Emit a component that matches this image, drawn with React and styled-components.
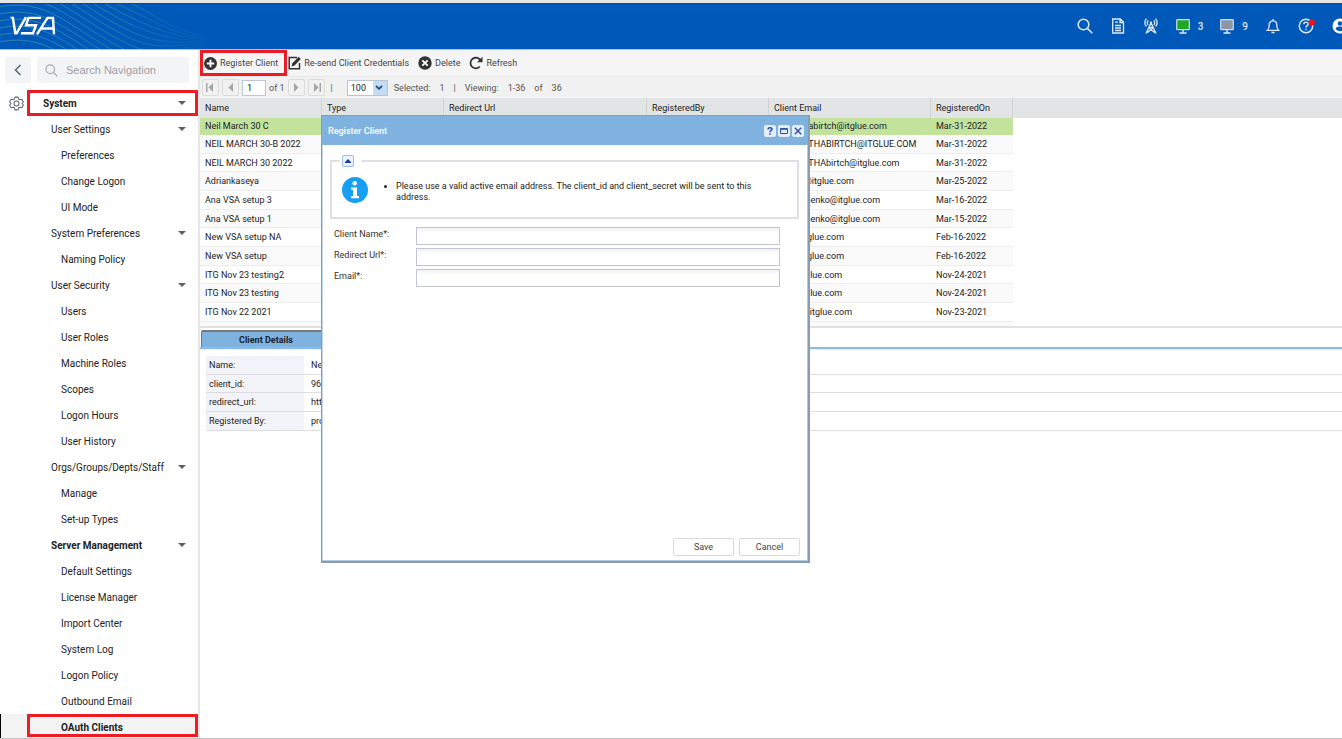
import { useState } from 'react';
import styled, { createGlobalStyle } from 'styled-components';

const GlobalStyle = createGlobalStyle`
    * {
        box-sizing: border-box;
    }
    body {
        margin: 0;
        background: white;
        color: #222;
        font-family: Roboto, "Liberation Sans", sans-serif;
        font-size: 9px;
    }
    button, input, select {
        font: inherit;
        color: inherit;
    }
    button {
        cursor: pointer;
    }
`;

const Page = styled.div`
    display: flex;
    flex-direction: column;
    height: 100vh;
    overflow: hidden;
    border-bottom: 1px solid #c4c4c4;
`;
const TopBar = styled.header`
    position: relative;
    flex: none;
    display: flex;
    align-items: center;
    justify-content: space-between;
    height: 50px;
    padding: 0 0 0 9px;
    background: #0059b9;
    border-top: 3px solid #e6e6e6;
    border-bottom: 1px solid #a9c3e2;
    box-shadow: inset 0 1px 0 #35404c;
    overflow: hidden;
`;
const Waves = styled.svg`
    position: absolute;
    left: 0;
    top: 1px;
`;
const Logo = styled.svg`
    position: relative;
`;
const TopIcons = styled.div`
    display: flex;
    align-items: center;
    gap: 17px;
    margin-right: -6px;
    color: #dfeaf7;
`;
const TopButton = styled.button`
    display: flex;
    align-items: center;
    gap: 6px;
    padding: 0;
    border: 0;
    background: none;
    font-size: 10px;
    font-weight: 500;
`;
const Body = styled.div`
    flex: 1;
    display: flex;
    min-height: 0;
`;

const Sidebar = styled.nav`
    flex: none;
    display: flex;
    flex-direction: column;
    width: 200px;
    padding-top: 7px;
    border-right: 2px solid #e6e6e6;
    overflow: hidden;
`;
const SearchRow = styled.div`
    flex: none;
    display: flex;
    gap: 6px;
    height: 26px;
    margin: 0 9px 7px 5px;
`;
const BackButton = styled.button`
    flex: none;
    display: flex;
    align-items: center;
    justify-content: center;
    width: 26px;
    padding: 0;
    border: 0;
    border-radius: 3px;
    background: #f3f4f6;
    color: #5b6670;
`;
const SearchBox = styled.label`
    flex: 1;
    min-width: 0;
    display: flex;
    align-items: center;
    gap: 8px;
    padding-left: 8px;
    border-radius: 3px;
    background: #f3f4f6;
    color: #a6abb0;
`;
const SearchInput = styled.input`
    flex: 1;
    min-width: 0;
    padding: 0;
    border: 0;
    outline: 0;
    background: none;
    font-family: "Liberation Sans", Arial, sans-serif;
    font-size: 11px;
    &::placeholder {
        color: #9b9fa4;
    }
`;
const NavRow = styled.div`
    flex: none;
    display: flex;
    align-items: center;
    height: 26px;
    background: ${({ $active }) => ($active ? '#f3f3f3' : 'none')};
    border-left: 1px solid ${({ $active }) => ($active ? '#000' : 'transparent')};
    color: #5b6670;
`;
const GearSlot = styled.span`
    display: flex;
    justify-content: flex-end;
    width: 26px;
    padding-right: 3px;
`;
const NavButton = styled.button`
    flex: 1;
    align-self: flex-start;
    display: flex;
    align-items: center;
    justify-content: space-between;
    height: ${({ $leaf }) => ($leaf ? '23px' : '26px')};
    padding: ${({ $leaf }) => ($leaf ? '3px' : '0')} 9px 0 ${({ $level }) => [13, 21, 31][$level]}px;
    border: 3px solid ${({ $marked }) => ($marked ? '#ed1c24' : 'transparent')};
    background: none;
    color: #222;
    font-size: 10px;
    font-weight: ${({ $bold }) => ($bold ? 700 : 400)};
    text-align: left;
`;

const Main = styled.main`
    position: relative;
    flex: 1;
    min-width: 0;
    display: flex;
    flex-direction: column;
`;
const Toolbar = styled.div`
    display: flex;
    align-items: center;
    height: 26px;
    background: #f5f5f5;
`;
const ToolButton = styled.button`
    display: flex;
    align-items: center;
    gap: 3px;
    height: 26px;
    padding: 0 ${({ $marked }) => ($marked ? '6px 0 1px' : '9px 0 0')};
    border: 3px solid ${({ $marked }) => ($marked ? '#ed1c24' : 'transparent')};
    border-width: ${({ $marked }) => ($marked ? '3px' : '0')};
    margin-right: ${({ $marked }) => ($marked ? '1px' : '0')};
    background: none;
    color: #444;
    white-space: nowrap;
`;
const Pager = styled.div`
    display: flex;
    align-items: center;
    gap: 3px;
    height: 22px;
    padding-left: 2px;
    background: #f1f1f1;
    border-top: 1px solid #e8e8e8;
    color: #555;
    white-space: pre;
`;
const PagerButton = styled.button`
    display: flex;
    align-items: center;
    justify-content: center;
    width: 17px;
    height: 17px;
    padding: 0;
    border: 1px solid #dcdcdc;
    border-radius: 2px;
    background: #f1f1f1;
    color: #a5a5a5;
`;
const PageInput = styled.input`
    width: 24px;
    height: 16px;
    padding: 0 4px;
    border: 1px solid #bcc6d4;
    background: white;
    color: #222;
`;
const SizePicker = styled.label`
    display: flex;
    align-items: center;
    width: 41px;
    height: 16px;
    margin-left: 8px;
    border: 1px solid #b6c4d6;
    background: linear-gradient(to right, white 25px, #c5dcf3 25px);
`;
const SizeSelect = styled.select`
    width: 27px;
    height: 14px;
    padding: 0 0 0 3px;
    border: 0;
    outline: 0;
    appearance: none;
    background: none;
    color: #222;
`;
const PagerText = styled.span`
    margin: 0 3px;
`;

const GridBox = styled.div`
    flex: none;
    height: 230px;
    overflow: hidden;
    border-bottom: 2px solid #e2e2e2;
    background: linear-gradient(#e2e4e6 20px, white 20px);
`;
const Grid = styled.table`
    table-layout: fixed;
    width: 813px;
    border-collapse: separate;
    border-spacing: 0;
`;
const HeadCell = styled.th`
    width: ${({ $width }) => $width}px;
    height: 20px;
    padding: 0 5px;
    border-right: 1px solid #cfd1d4;
    background: #e2e4e6;
    font-weight: 400;
    text-align: left;
`;
const GridRow = styled.tr`
    height: 19px;
    background: ${({ $selected }) => ($selected ? '#c3e29c' : 'white')};
    &:nth-child(even) {
        background: #fafafa;
    }
    &:nth-child(3n) {
        height: 18px;
    }
    &:first-child {
        height: 17px;
    }
`;
const Cell = styled.td`
    padding: 0 5px;
    border-bottom: 1px solid ${({ $selected }) => ($selected ? '#c3e29c' : '#ededed')};
    overflow: hidden;
    white-space: nowrap;
`;

const TabStrip = styled.div`
    flex: none;
    display: flex;
    height: 21px;
    padding: 2px 0 0 1px;
    border-bottom: 2px solid #8bbce6;
`;
const Tab = styled.button`
    width: 130px;
    padding: 0;
    border: 1px solid #777;
    border-width: 2px 1px 0;
    border-radius: 2px 2px 0 0;
    background: #80b2df;
    color: #16222e;
    font-weight: 700;
`;
const DetailsPanel = styled.div`
    padding: 6px 0 0 6px;
    border-top: 1px solid #ececec;
`;
const Details = styled.table`
    width: 100%;
    border-collapse: separate;
    border-spacing: 0;
`;
const DetailRow = styled.tr`
    height: 19px;
    &:nth-child(2) {
        height: 18px;
    }
`;
const DetailLabel = styled.th`
    width: 98px;
    padding: 0 3px;
    border-bottom: 1px solid #dcdcde;
    background: #f2f3f8;
    font-weight: 400;
    text-align: left;
`;
const DetailValue = styled.td`
    padding: 0 7px;
    border-bottom: 1px solid #dfdfdf;
`;

const Dialog = styled.section`
    position: absolute;
    left: 121px;
    top: 65px;
    display: flex;
    flex-direction: column;
    width: 489px;
    height: 448px;
    border: 1px solid #8a9cb0;
    border-width: 1px 2px 2px 1px;
    background: white;
    box-shadow: inset 1px 0 0 #c3d6e8, inset -1px -1px 0 #b5cadd;
`;
const DialogHeader = styled.header`
    display: flex;
    align-items: center;
    gap: 2px;
    height: 29px;
    padding: 0 4px 0 6px;
    background: #80b2df;
    color: white;
`;
const DialogTitle = styled.h2`
    flex: 1;
    margin: 0;
    font-size: 9px;
    font-weight: 500;
`;
const HeaderButton = styled.button`
    display: flex;
    align-items: center;
    justify-content: center;
    width: 12px;
    height: 12px;
    padding: 0;
    border: 1px solid #e4eefb;
    border-radius: 2px;
    background: #e4eefb;
    color: #2b4fb0;
`;
const Notice = styled.fieldset`
    height: 64px;
    margin: 10px 9px 8px 8px;
    padding: 0 0 0 8px;
    border: 2px solid #dfdfe6;
`;
const Legend = styled.legend`
    padding: 0 7px 0 2px;
`;
const NoticeBody = styled.div`
    display: flex;
    align-items: center;
    padding: 10px 0 0 2px;
`;
const CollapseButton = styled.button`
    display: flex;
    align-items: center;
    justify-content: center;
    width: 12px;
    height: 12px;
    padding: 0;
    border: 1px solid #9dbbe8;
    border-radius: 2px;
    background: #eaf2fd;
    color: #1f3fa8;
`;
const NoticeList = styled.ul`
    flex: 1;
    margin: 0;
    padding: 4px 44px 0 28px;
    line-height: 11px;
`;
const Form = styled.form`
    flex: 1;
    display: flex;
    flex-direction: column;
    gap: 3px;
    padding: 0 8px 5px 12px;
`;
const Field = styled.label`
    display: flex;
    color: #333;
`;
const FieldName = styled.span`
    width: 82px;
    padding-top: 2px;
`;
const FieldInput = styled.input`
    flex: 1;
    height: 18px;
    margin-right: 20px;
    padding: 0 4px;
    border: 1px solid #c3c5d4;
    background: linear-gradient(#f1f1f3, white 5px);
    outline: 0;
`;
const Actions = styled.div`
    display: flex;
    justify-content: flex-end;
    gap: 5px;
    margin-top: auto;
`;
const ActionButton = styled.button`
    width: 61px;
    height: 18px;
    padding: 0;
    border: 1px solid #d9d9d9;
    border-radius: 2px;
    background: white;
    color: #444;
`;

const navigation = [
    { name: 'System', level: 0, bold: true, marked: true },
    { name: 'User Settings', level: 1 },
    { name: 'Preferences', level: 2 },
    { name: 'Change Logon', level: 2 },
    { name: 'UI Mode', level: 2 },
    { name: 'System Preferences', level: 1 },
    { name: 'Naming Policy', level: 2 },
    { name: 'User Security', level: 1 },
    { name: 'Users', level: 2 },
    { name: 'User Roles', level: 2 },
    { name: 'Machine Roles', level: 2 },
    { name: 'Scopes', level: 2 },
    { name: 'Logon Hours', level: 2 },
    { name: 'User History', level: 2 },
    { name: 'Orgs/Groups/Depts/Staff', level: 1 },
    { name: 'Manage', level: 2 },
    { name: 'Set-up Types', level: 2 },
    { name: 'Server Management', level: 1, bold: true },
    { name: 'Default Settings', level: 2 },
    { name: 'License Manager', level: 2 },
    { name: 'Import Center', level: 2 },
    { name: 'System Log', level: 2 },
    { name: 'Logon Policy', level: 2 },
    { name: 'Outbound Email', level: 2 },
    { name: 'OAuth Clients', level: 2, bold: true, marked: true, active: true },
];

const columns = [
    { name: 'Name', width: 122 },
    { name: 'Type', width: 122 },
    { name: 'Redirect Url', width: 203 },
    { name: 'RegisteredBy', width: 122 },
    { name: 'Client Email', width: 162 },
    { name: 'RegisteredOn', width: 82 },
];

const clients = [
    { name: 'Neil March 30 C', email: 'neil.mithabirtch@itglue.com', date: 'Mar-31-2022' },
    { name: 'NEIL MARCH 30-B 2022', email: 'NEIL.MRTHABIRTCH@ITGLUE.COM', date: 'Mar-31-2022' },
    { name: 'NEIL MARCH 30 2022', email: 'NEIL.MRTHAbirtch@itglue.com', date: 'Mar-31-2022' },
    { name: 'Adriankaseya', email: 'adriank@itglue.com', date: 'Mar-25-2022' },
    { name: 'Ana VSA setup 3', email: 'ana.shchenko@itglue.com', date: 'Mar-16-2022' },
    { name: 'Ana VSA setup 1', email: 'ana.shchenko@itglue.com', date: 'Mar-15-2022' },
    { name: 'New VSA setup NA', email: 'anna@itglue.com', date: 'Feb-16-2022' },
    { name: 'New VSA setup', email: 'anna@itglue.com', date: 'Feb-16-2022' },
    { name: 'ITG Nov 23 testing2', email: 'qam@itglue.com', date: 'Nov-24-2021' },
    { name: 'ITG Nov 23 testing', email: 'qam@itglue.com', date: 'Nov-24-2021' },
    { name: 'ITG Nov 22 2021', email: 'testers@itglue.com', date: 'Nov-23-2021' },
    { name: '', email: '', date: '' },
];

const details = [
    ['Name:', 'Neil March 30 C'],
    ['client_id:', '962840175'],
    ['redirect_url:', 'https://itglue.com'],
    ['Registered By:', 'provider'],
];

const waveOffsets = [-55, -48, -41, -34, -27, -20, -13, -6, 1, 8, 15, 22, 29, 36];

const HeaderWaves = () => (
    <Waves width="230" height="46" viewBox="0 0 230 46" fill="none" aria-hidden="true">
        <defs>
            <linearGradient id="fade" x1="0" x2="230" y1="0" y2="0" gradientUnits="userSpaceOnUse">
                <stop offset="0" stopColor="#4f9f9f" stopOpacity="0.6" />
                <stop offset="0.5" stopColor="#4f9f9f" stopOpacity="0.5" />
                <stop offset="0.92" stopColor="#4f9f9f" stopOpacity="0" />
            </linearGradient>
        </defs>
        {waveOffsets.map((y) => (
            <path
                key={y}
                d={`M-20 ${y + 9} C5 ${y - 3} 30 ${y - 3} 55 ${y + 10} S100 ${y + 40} 130 ${y + 54} S180 ${y * 0.2 + 43} 215 ${y * 0.2 + 44}`}
                stroke="url(#fade)"
            />
        ))}
    </Waves>
);

const VsaLogo = () => (
    <Logo width="48" height="22" viewBox="0 0 48 22" fill="none" stroke="white" role="img" aria-label="VSA">
        <path d="M1.500 2.500H5" strokeWidth="1.600" />
        <path d="M3.800 2.200L6.300 18.300H7.500L17 2.200" strokeWidth="2.400" />
        <path d="M32 2.900H19.500L17 10.300H27L24 18.200H12" strokeWidth="2.400" />
        <path d="M28 19.300L38.500 2.900H44L45 19.300M32 13.500H44" strokeWidth="2.400" />
    </Logo>
);

const SearchIcon = ({ size = 16, weight = 1.5 }) => (
    <svg width={size} height={size} viewBox="0 0 16 16" fill="none" stroke="currentColor" strokeWidth={weight} aria-hidden="true">
        <circle cx="6.500" cy="6.500" r="5.300" />
        <path d="M10.400 10.400L15.300 15.300" />
    </svg>
);

const DocumentIcon = () => (
    <svg width="16" height="16" viewBox="0 0 16 16" fill="none" stroke="currentColor" strokeWidth="1.300" aria-hidden="true">
        <path d="M2.700 1h7.600l3.200 3.200V15H2.700zM10 1v3.500h3.500M5 4.200h3M5 7.500h6M5 10h6M5 12.500h6" />
    </svg>
);

const TowerIcon = () => (
    <svg width="16" height="16" viewBox="0 0 16 16" fill="none" stroke="currentColor" strokeWidth="1.300" aria-hidden="true">
        <path d="M8 5L3 15.500M8 5l5 10.500M6 10l6 4.800M10 10l-6 4.800M6 9.300h4" />
        <path d="M5.300 7a3 3 0 010-4.500M10.700 7a3 3 0 000-4.500M3.500 8.500a5.300 5.300 0 010-7.700M12.500 8.500a5.300 5.300 0 000-7.700" />
        <circle cx="8" cy="4.800" r="1.200" fill="currentColor" stroke="none" />
    </svg>
);

const MonitorIcon = ({ color }) => (
    <svg width="16" height="16" viewBox="0 0 16 16" aria-hidden="true">
        <rect x="0.700" y="1.700" width="12.600" height="10" rx="0.800" fill={color} stroke="#c9dcf2" strokeWidth="1.200" />
        <path d="M7 12v2.500M3.500 15h7" stroke="#dfeaf7" strokeWidth="1.400" />
    </svg>
);

const BellIcon = () => (
    <svg width="16" height="16" viewBox="0 0 16 16" fill="none" stroke="currentColor" strokeWidth="1.300" aria-hidden="true">
        <path d="M2.500 12.300c1.300-1.200 1.700-2.500 1.700-5.300C4.200 4.500 5.700 2.800 8 2.800s3.800 1.700 3.800 4.200c0 2.800.4 4.100 1.700 5.300zM8 1v1.800M6.500 14.500h3" />
    </svg>
);

const HelpIcon = () => (
    <svg width="17" height="16" viewBox="0 0 17 16" fill="none" stroke="currentColor" strokeWidth="1.400" aria-hidden="true">
        <circle cx="8" cy="8" r="6.700" />
        <path d="M5.800 6.300c0-1.300.9-2.200 2.200-2.200s2.200.9 2.200 2c0 1.500-2.200 1.600-2.200 3.500M8 10.800v1.500" />
        <circle cx="13.800" cy="4.500" r="3.100" fill="#ff0d1c" stroke="none" />
    </svg>
);

const UserIcon = () => (
    <svg width="16" height="16" viewBox="0 0 16 16" aria-hidden="true">
        <circle cx="8" cy="8" r="7.500" fill="white" />
        <circle cx="8" cy="5.500" r="2.300" fill="#0059b9" />
        <path d="M3.500 10.500c1-1.500 2.500-2 4.500-2s3.500.5 4.500 2c-1 1.700-2.500 2.700-4.500 2.700s-3.500-1-4.500-2.700z" fill="#0059b9" />
    </svg>
);

const GearIcon = () => (
    <svg width="15" height="15" viewBox="0 0 16 16" fill="none" stroke="currentColor" strokeWidth="1.100" aria-hidden="true">
        <path d="M6.300 1.200h3.400l.6 2.200 1.200.7 2.200-.6 1.700 2.900L13.800 8l1.600 1.600-1.700 2.900-2.200-.6-1.200.7-.6 2.200H6.300l-.6-2.200-1.200-.7-2.200.6L.6 9.600 2.200 8 .6 6.400l1.700-2.900 2.200.6 1.200-.7z" strokeLinejoin="round" />
        <circle cx="8" cy="8" r="2.600" />
    </svg>
);

const Caret = () => (
    <svg width="8" height="4" viewBox="0 0 8 4" fill="#56616b" aria-hidden="true">
        <path d="M0 0h8L4 4z" />
    </svg>
);

const AddIcon = () => (
    <svg width="13" height="13" viewBox="0 0 14 14" aria-hidden="true">
        <circle cx="7" cy="7" r="7" fill="#333" />
        <path d="M7 3v8M3 7h8" stroke="white" strokeWidth="2" />
    </svg>
);

const EditIcon = () => (
    <svg width="13" height="14" viewBox="0 0 13 14" fill="none" aria-hidden="true">
        <path d="M9 1.500H1.200v11.300h10.300V7" stroke="#333" strokeWidth="1.500" />
        <path d="M3.500 10.500l.9-3.200L10.600.8l2.200 2.200-6.200 6.500z" fill="#333" />
    </svg>
);

const DeleteIcon = () => (
    <svg width="14" height="14" viewBox="0 0 14 14" aria-hidden="true">
        <circle cx="7" cy="7" r="6.700" fill="#333" />
        <path d="M4.300 4.300l5.400 5.400M9.700 4.300L4.300 9.700" stroke="white" strokeWidth="1.800" />
    </svg>
);

const RefreshIcon = () => (
    <svg width="14" height="14" viewBox="0 0 14 14" fill="none" aria-hidden="true">
        <path d="M10.800 10.500A5.300 5.300 0 1110 2.800l1.300 1.200" stroke="#333" strokeWidth="1.800" />
        <path d="M13.500.8v5.500H8z" fill="#333" />
    </svg>
);

const Arrow = ({ back, end }) => (
    <svg width="9" height="9" viewBox="0 0 9 9" fill="currentColor" aria-hidden="true">
        <path d={back ? 'M7 0v9L2.500 4.500z' : 'M2 0v9l4.500-4.500z'} />
        {end && <rect x={back ? 0 : 7.5} width="1.500" height="9" />}
    </svg>
);

const InfoIcon = () => (
    <svg width="26" height="26" viewBox="0 0 26 26" role="img" aria-label="Information">
        <circle cx="13" cy="13" r="13" fill="#169ff5" />
        <circle cx="12.700" cy="6.300" r="2.300" fill="white" />
        <path d="M9 10.500h6v8.500h2v2.300H9V19h2v-6.200H9z" fill="white" />
    </svg>
);

const RegisterDialog = ({ onClose }) => (
    <Dialog role="dialog" aria-labelledby="dialog-title">
        <DialogHeader>
            <DialogTitle id="dialog-title">Register Client</DialogTitle>
            <HeaderButton aria-label="Help">
                <svg width="8" height="8" viewBox="0 0 8 8" fill="none" stroke="currentColor" strokeWidth="1.500">
                    <path d="M2 2.500C2 1.300 3 .8 4 .8s2 .5 2 1.500C6 3.500 4 3.500 4 5.200M4 6.300v1.500" />
                </svg>
            </HeaderButton>
            <HeaderButton aria-label="Maximize">
                <svg width="8" height="8" viewBox="0 0 8 8" fill="none" stroke="currentColor">
                    <path d="M.5 1.500h7v5h-7zM.5 2.300h7" />
                </svg>
            </HeaderButton>
            <HeaderButton aria-label="Close" onClick={onClose}>
                <svg width="8" height="8" viewBox="0 0 8 8" fill="none" stroke="currentColor" strokeWidth="1.400">
                    <path d="M.8.8l6.400 6.400M7.200.8L.8 7.200" />
                </svg>
            </HeaderButton>
        </DialogHeader>
        <Notice>
            <Legend>
                <CollapseButton type="button" aria-label="Collapse">
                    <svg width="6" height="4" viewBox="0 0 6 4" fill="currentColor">
                        <path d="M3 0l3 3v1H0V3z" />
                    </svg>
                </CollapseButton>
            </Legend>
            <NoticeBody>
                <InfoIcon />
                <NoticeList>
                    <li>
                        Please use a valid active email address. The client_id and client_secret will be sent to this address.
                    </li>
                </NoticeList>
            </NoticeBody>
        </Notice>
        <Form onSubmit={(e) => e.preventDefault()}>
            {['Client Name*:', 'Redirect Url*:', 'Email*:'].map((name) => (
                <Field key={name}>
                    <FieldName>{name}</FieldName>
                    <FieldInput type="text" />
                </Field>
            ))}
            <Actions>
                <ActionButton type="submit">Save</ActionButton>
                <ActionButton type="button" onClick={onClose}>Cancel</ActionButton>
            </Actions>
        </Form>
    </Dialog>
);

const App = () => {
    const [showDialog, setShowDialog] = useState(true);

    return (
        <Page>
            <GlobalStyle />
            <TopBar>
                <HeaderWaves />
                <VsaLogo />
                <TopIcons>
                    <TopButton aria-label="Search"><SearchIcon /></TopButton>
                    <TopButton aria-label="Documents"><DocumentIcon /></TopButton>
                    <TopButton aria-label="Network"><TowerIcon /></TopButton>
                    <TopButton><MonitorIcon color="#22a722" />3</TopButton>
                    <TopButton><MonitorIcon color="#8d97a3" />9</TopButton>
                    <TopButton aria-label="Notifications"><BellIcon /></TopButton>
                    <TopButton aria-label="Help"><HelpIcon /></TopButton>
                    <TopButton aria-label="Account"><UserIcon /></TopButton>
                </TopIcons>
            </TopBar>
            <Body>
                <Sidebar>
                    <SearchRow>
                        <BackButton aria-label="Back">
                            <svg width="8" height="12" viewBox="0 0 8 12" fill="none" stroke="currentColor" strokeWidth="1.500">
                                <path d="M6.500 1L1.500 6l5 5" />
                            </svg>
                        </BackButton>
                        <SearchBox>
                            <SearchIcon size={13} />
                            <SearchInput type="text" placeholder="Search Navigation" aria-label="Search Navigation" />
                        </SearchBox>
                    </SearchRow>
                    {navigation.map((item) => (
                        <NavRow key={item.name} $active={item.active}>
                            <GearSlot>{item.level === 0 && <GearIcon />}</GearSlot>
                            <NavButton
                                $level={item.level}
                                $bold={item.bold}
                                $marked={item.marked}
                                $leaf={item.level === 2}
                            >
                                {item.name}
                                {item.level < 2 && <Caret />}
                            </NavButton>
                        </NavRow>
                    ))}
                </Sidebar>
                <Main>
                    <Toolbar>
                        <ToolButton $marked onClick={() => setShowDialog(true)}><AddIcon />Register Client</ToolButton>
                        <ToolButton><EditIcon />Re-send Client Credentials</ToolButton>
                        <ToolButton><DeleteIcon />Delete</ToolButton>
                        <ToolButton><RefreshIcon />Refresh</ToolButton>
                    </Toolbar>
                    <Pager>
                        <PagerButton aria-label="First page"><Arrow back end /></PagerButton>
                        <PagerButton aria-label="Previous page"><Arrow back /></PagerButton>
                        <PageInput type="text" defaultValue="1" aria-label="Page" />
                        <span>of 1</span>
                        <PagerButton aria-label="Next page"><Arrow /></PagerButton>
                        <PagerButton aria-label="Last page"><Arrow end /></PagerButton>
                        <PagerText>|</PagerText>
                        <SizePicker>
                            <SizeSelect defaultValue="100" aria-label="Rows per page">
                                <option>50</option>
                                <option>100</option>
                            </SizeSelect>
                            <svg width="8" height="5" viewBox="0 0 8 5" fill="none" stroke="#1d4c86" strokeWidth="1.800">
                                <path d="M1 .8l3 3 3-3" />
                            </svg>
                        </SizePicker>
                        <PagerText>Selected:</PagerText>
                        <PagerText>1</PagerText>
                        <PagerText>|</PagerText>
                        <PagerText>Viewing:</PagerText>
                        <PagerText>1-36</PagerText>
                        <PagerText>of</PagerText>
                        <PagerText>36</PagerText>
                    </Pager>
                    <GridBox>
                        <Grid>
                            <thead>
                                <tr>
                                    {columns.map((column) => (
                                        <HeadCell key={column.name} $width={column.width}>{column.name}</HeadCell>
                                    ))}
                                </tr>
                            </thead>
                            <tbody>
                                {clients.map((client, index) => (
                                    <GridRow key={index} $selected={index === 0}>
                                        <Cell $selected={index === 0}>{client.name}</Cell>
                                        <Cell $selected={index === 0} />
                                        <Cell $selected={index === 0} />
                                        <Cell $selected={index === 0} />
                                        <Cell $selected={index === 0}>{client.email}</Cell>
                                        <Cell $selected={index === 0}>{client.date}</Cell>
                                    </GridRow>
                                ))}
                            </tbody>
                        </Grid>
                    </GridBox>
                    <TabStrip>
                        <Tab>Client Details</Tab>
                    </TabStrip>
                    <DetailsPanel>
                        <Details>
                            <tbody>
                                {details.map(([label, value]) => (
                                    <DetailRow key={label}>
                                        <DetailLabel scope="row">{label}</DetailLabel>
                                        <DetailValue>{value}</DetailValue>
                                    </DetailRow>
                                ))}
                            </tbody>
                        </Details>
                    </DetailsPanel>
                    {showDialog && <RegisterDialog onClose={() => setShowDialog(false)} />}
                </Main>
            </Body>
        </Page>
    );
};

export default App;
